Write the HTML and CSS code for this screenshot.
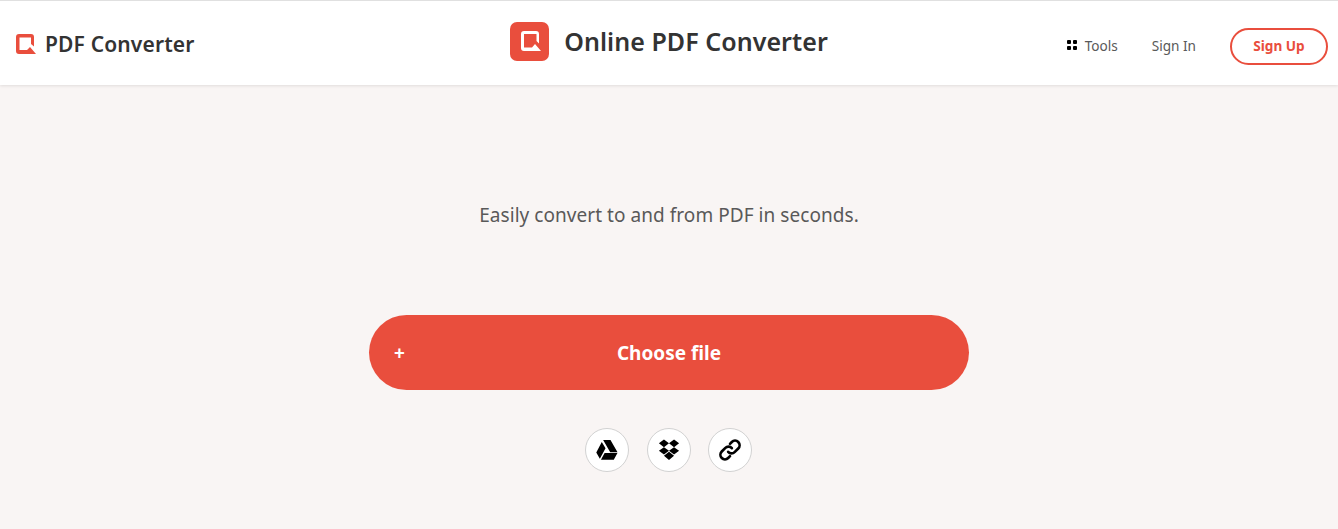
FILE: index.html
```html
<!DOCTYPE html>
<html lang="en">
<head>
<meta charset="utf-8">
<title>Online PDF Converter</title>
<link rel="stylesheet" href="styles.css">
</head>
<body>
<header class="header">
  <a class="brand" href="#">
    <svg class="brand-icon" viewBox="0 0 20 20" aria-hidden="true"><path d="M3 0H15a3 3 0 0 1 3 3V12.500L15 10V3.500H3.500V16H11L14 13L20 20H3a3 3 0 0 1-3-3V3a3 3 0 0 1 3-3z" fill="#e94e3d"/></svg>
    <span>PDF Converter</span>
  </a>
  <div class="title">
    <span class="title-badge">
      <svg class="title-icon" viewBox="0 0 20 20" aria-hidden="true"><path d="M3 0H15a3 3 0 0 1 3 3V12.500L15.500 10V3H3V16.500H11L14 13L20 20H3a3 3 0 0 1-3-3V3a3 3 0 0 1 3-3z" fill="#fff"/></svg>
    </span>
    <h1>Online PDF Converter</h1>
  </div>
  <nav class="nav">
    <a class="nav-link tools" href="#"><span class="dots"><i></i><i></i><i></i><i></i></span>Tools</a>
    <a class="nav-link signin" href="#">Sign In</a>
    <a class="signup" href="#">Sign Up</a>
  </nav>
</header>
<main class="main">
  <p class="tagline">Easily convert to and from PDF in seconds.</p>
  <button class="choose" type="button"><span class="plus">+</span><span>Choose file</span></button>
  <div class="sources">
    <a class="source" href="#" aria-label="Google Drive">
      <svg viewBox="0 0 24 24" aria-hidden="true"><path d="M7.800 1h8l7.700 13.500h-8zM6.300 3.300 10.400 10.200 4.200 21.500.3 14.600zM9.400 15.400h14L19.400 22.500H5.400z"/></svg>
    </a>
    <a class="source" href="#" aria-label="Dropbox">
      <svg viewBox="0 0 24 24" aria-hidden="true"><path d="M6.500.5 12 4.700 6.500 8.900 1 4.700zM17.500.5 23 4.700l-5.500 4.200L12 4.700zM1 12.900l5.500-4 5.500 4-5.500 4zM17.500 8.900l5.500 4-5.500 4-5.500-4zM6.500 18.400l5.500-4.400 5.500 4.400-5.500 4.600z"/></svg>
    </a>
    <a class="source" href="#" aria-label="Link">
      <svg viewBox="0 0 24 24" fill="none" stroke="#000" stroke-width="2.900" stroke-linecap="round" aria-hidden="true"><path d="M10 14a4.800 4.800 0 0 0 7 .3l4-4a4.900 4.900 0 0 0-7-7l-2 2"/><path d="M14 10a4.800 4.800 0 0 0-7-.3l-4 4a4.900 4.900 0 0 0 7 7l2-2"/></svg>
    </a>
  </div>
</main>
</body>
</html>
```
FILE: styles.css
```css
* { box-sizing: border-box; }
html, body { height: 100%; }
body {
  margin: 0;
  background: #f9f5f4;
  color: #333;
  font-family: "Noto Sans", "Open Sans", sans-serif;
  overflow: hidden;
}
a { text-decoration: none; color: inherit; }
.header {
  height: 85px;
  background: #fff;
  border-top: 1px solid #e0e0e0;
  box-shadow: 0 1px 3px rgba(0, 0, 0, .1);
  display: grid;
  grid-template-columns: 1fr auto 1fr;
  align-items: center;
  padding: 0 10px;
}
.brand {
  display: flex;
  align-items: center;
  gap: 9px;
  margin: 1px 0 0 6px;
  font-size: 21px;
  font-weight: 600;
  letter-spacing: .15px;
  color: #333;
}
.brand-icon { width: 20px; height: 20px; }
.title { display: flex; align-items: center; gap: 15px; margin-top: -4px; }
.title-badge {
  width: 39px;
  height: 39px;
  border-radius: 7px;
  background: #e94e3d;
  display: flex;
  align-items: center;
  justify-content: center;
  padding-left: 2px;
}
.title-icon { width: 20px; height: 20px; flex: none; }
h1 { margin: 0; font-size: 25px; font-weight: 600; letter-spacing: .05px; color: #333; }
.nav { display: flex; align-items: center; justify-content: flex-end; padding-top: 6px; font-size: 13.6px; color: #595959; }
.nav-link { padding-bottom: 2px; }
.tools { display: flex; align-items: center; gap: 8px; margin-right: 34px; }
.signin { margin-right: 34px; }
.dots { display: grid; grid-template-columns: 4px 4px; gap: 2px; }
.dots i { width: 4px; height: 4px; background: #000; border-radius: 1px; }
.signup {
  width: 98px;
  height: 37px;
  padding-bottom: 2px;
  border: 2px solid #e94e3d;
  border-radius: 19px;
  color: #e94e3d;
  font-weight: 700;
  display: flex;
  align-items: center;
  justify-content: center;
}
.main { display: flex; flex-direction: column; align-items: center; }
.tagline { margin: 116px 0 0; height: 28px; line-height: 28px; font-size: 19px; letter-spacing: .05px; color: #595959; }
.choose {
  margin-top: 86px;
  width: 600px;
  height: 75px;
  border: 0;
  border-radius: 38px;
  background: #e94e3d;
  color: #fff;
  font: 700 19px "Noto Sans", "Open Sans", sans-serif;
  display: flex;
  align-items: center;
  justify-content: center;
  position: relative;
}
.plus { position: absolute; left: 25px; font-size: 19px; font-weight: 700; }
.sources { margin: 38px .2px 0 0; display: flex; gap: 17.500px; }
.source {
  width: 44px;
  height: 44px;
  border-radius: 50%;
  background: #fff;
  border: 1px solid #d2d2d2;
  display: flex;
  align-items: center;
  justify-content: center;
}
.source svg { width: 22px; height: 22px; }
```
